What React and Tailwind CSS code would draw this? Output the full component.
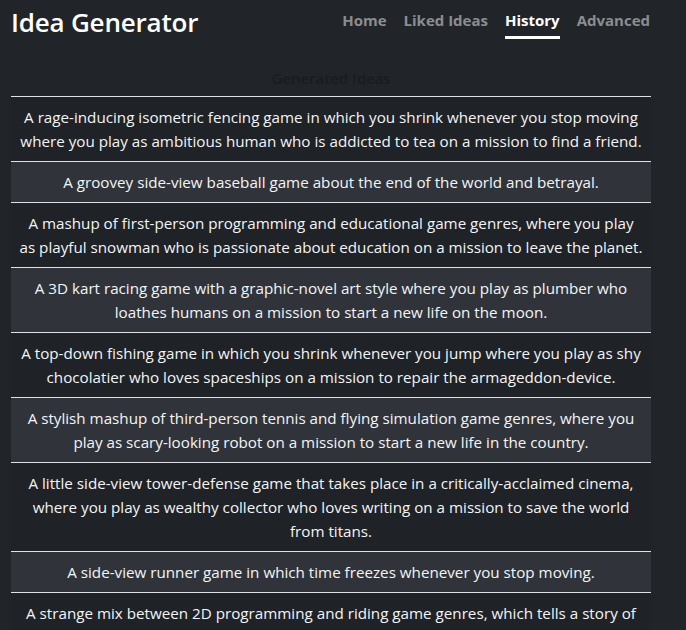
import React from 'react';

// each idea split where the table cell wraps it
const ideas = [
  ['A rage-inducing isometric fencing game in which you shrink whenever you stop moving', 'where you play as ambitious human who is addicted to tea on a mission to find a friend.'],
  ['A groovey side-view baseball game about the end of the world and betrayal.'],
  ['A mashup of first-person programming and educational game genres, where you play', 'as playful snowman who is passionate about education on a mission to leave the planet.'],
  ['A 3D kart racing game with a graphic-novel art style where you play as plumber who', 'loathes humans on a mission to start a new life on the moon.'],
  ['A top-down fishing game in which you shrink whenever you jump where you play as shy', 'chocolatier who loves spaceships on a mission to repair the armageddon-device.'],
  ['A stylish mashup of third-person tennis and flying simulation game genres, where you', 'play as scary-looking robot on a mission to start a new life in the country.'],
  ['A little side-view tower-defense game that takes place in a critically-acclaimed cinema,', 'where you play as wealthy collector who loves writing on a mission to save the world', 'from titans.'],
  ['A side-view runner game in which time freezes whenever you stop moving.'],
  ['A strange mix between 2D programming and riding game genres, which tells a story of', 'a lonely knight on a mission to find the lost city.'],
];

const links = ['Home', 'Liked Ideas', 'History', 'Advanced'];

export default function App() {
  return (
    <div className="min-h-screen bg-[#212529] text-white font-['Open_Sans',sans-serif] overflow-hidden">
      {/* Header */}
      <header className="flex items-start justify-between pl-[11px] pr-[36px] pt-[4px]">
        <h1 className="text-[26px] font-semibold leading-[36px] tracking-[-0.2px]">Idea Generator</h1>
        <nav className="flex items-center gap-[17px] pt-[5px]">
          {links.map((l) => (
            <a
              key={l}
              className={`text-[15px] font-bold leading-[22px] pb-[5px] border-b-[3px] ${
                l === 'History'
                  ? 'text-white border-white'
                  : 'text-[#8c8d8f] border-transparent'
              }`}
            >
              {l}
            </a>
          ))}
        </nav>
      </header>

      {/* History table */}
      <div className="ml-[11px] w-[640px]">
        <div className="text-center text-[15px] font-semibold text-[#1a1c1f] pt-[26px] pb-[6px] leading-[24px]">
          Generated Ideas
        </div>
        <div className="border-t border-[#dee2e6] bg-[#1f2226]">
          {ideas.map((lines, i) => (
            <div
              key={i}
              className={`py-[8px] border-b border-[#dee2e6] flex flex-col items-center text-[15.2px] leading-[24px] text-[#f3f4f5] ${
                i % 2 === 1 ? 'bg-[#30343a]' : ''
              }`}
            >
              {lines.map((line, j) => (
                <span key={j} className="whitespace-nowrap">{line}</span>
              ))}
            </div>
          ))}
        </div>
      </div>
    </div>
  );
}
